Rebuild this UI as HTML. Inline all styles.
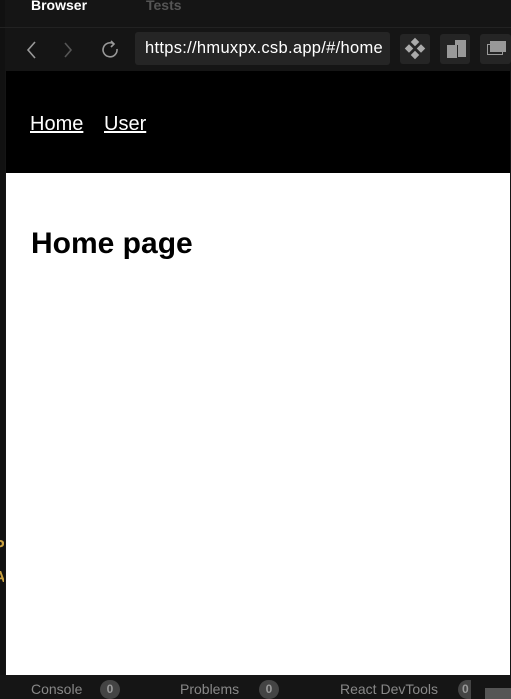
<!DOCTYPE html>
<html><head><style>
*{margin:0;padding:0;box-sizing:border-box}
body{width:511px;height:699px;background:#151515;position:relative;overflow:hidden;font-family:"Liberation Sans",sans-serif}
.abs{position:absolute}
.tab{font-size:14px;top:-3px;font-weight:bold}
.btn{background:#252525;border-radius:3px}
</style></head><body>
<div class="abs" style="left:0;top:0;width:5px;height:699px;background:#111"></div>
<div class="abs tab" style="left:31px;color:#fff">Browser</div>
<div class="abs tab" style="left:146px;color:#555">Tests</div>
<div class="abs" style="left:0;top:27px;width:511px;height:1px;background:#222"></div>
<svg class="abs" style="left:20px;top:38px" width="100" height="24" fill="none" stroke-width="1.6">
<path d="M15 4 L8 12 L15 20" stroke="#999"/>
<path d="M45 5 L51 12 L45 19" stroke="#555"/>
<path d="M98 11 A7 7 0 1 1 95 6" stroke="#999" transform="translate(-1,0)"/>
<path d="M92 3 L95 6 L92 9" stroke="#999" transform="translate(-1,0)"/>
</svg>
<div class="abs btn" style="left:135px;top:32px;width:255px;height:33px;color:#fff;font-size:16.5px;letter-spacing:0.3px;line-height:33px;padding-left:10px;white-space:nowrap;overflow:hidden">https://hmuxpx.csb.app/#/home</div>
<div class="abs btn" style="left:400px;top:34px;width:30px;height:30px"></div>
<svg class="abs" style="left:400px;top:34px" width="30" height="30" fill="#aaa">
<rect x="12" y="5" width="6" height="6" transform="rotate(45 15 8)"/>
<rect x="12" y="18" width="6" height="6" transform="rotate(45 15 21)"/>
<rect x="6" y="11.5" width="6" height="6" transform="rotate(45 9 14.5)"/>
<rect x="18" y="11.5" width="6" height="6" transform="rotate(45 21 14.5)"/>
</svg>
<div class="abs btn" style="left:440px;top:34px;width:30px;height:30px"></div>
<div class="abs" style="left:455px;top:40px;width:11px;height:17px;background:#999"></div>
<div class="abs" style="left:447px;top:45px;width:11px;height:13px;background:#999;border-right:1px solid #252525"></div>
<div class="abs btn" style="left:480px;top:34px;width:31px;height:30px"></div>
<div class="abs" style="left:487px;top:44px;width:16px;height:11px;border:1.5px solid #999"></div>
<div class="abs" style="left:490px;top:41px;width:16px;height:11px;background:#999"></div>
<div class="abs" style="left:6px;top:71px;width:504px;height:102px;background:#000"></div>
<a class="abs" style="left:30px;top:113px;color:#fff;font-size:20px;text-decoration:underline">Home</a>
<a class="abs" style="left:104px;top:113px;color:#fff;font-size:20px;text-decoration:underline">User</a>
<div class="abs" style="left:6px;top:173px;width:504px;height:502px;background:#fff"></div>
<div class="abs" style="left:31px;top:227px;font-size:30px;font-weight:bold;color:#000">Home page</div>
<div class="abs" style="left:0;top:675px;width:511px;height:24px;background:#151515"></div>
<div class="abs" style="left:31px;top:681px;color:#888;font-size:14px">Console</div>
<div class="abs" style="left:100px;top:680px;width:20px;height:19px;border-radius:10px;background:#444;color:#999;font-size:12px;font-weight:bold;text-align:center;line-height:19px">0</div>
<div class="abs" style="left:180px;top:681px;color:#888;font-size:14px">Problems</div>
<div class="abs" style="left:259px;top:680px;width:20px;height:19px;border-radius:10px;background:#444;color:#999;font-size:12px;font-weight:bold;text-align:center;line-height:19px">0</div>
<div class="abs" style="left:340px;top:681px;color:#888;font-size:14px">React DevTools</div>
<div class="abs" style="left:458px;top:680px;width:13px;height:19px;border-radius:10px 0 0 10px;background:#444;color:#999;font-size:12px;font-weight:bold;padding-left:4px;line-height:19px">0</div>
<div class="abs" style="left:485px;top:688px;width:26px;height:11px;background:#555"></div>
<div class="abs" style="left:-6px;top:538px;width:10px;overflow:hidden;color:#c9a040;font-size:16px;font-weight:bold">P</div>
<div class="abs" style="left:-6px;top:569px;width:10px;overflow:hidden;color:#c9a040;font-size:16px;font-weight:bold">A</div>
</body></html>
